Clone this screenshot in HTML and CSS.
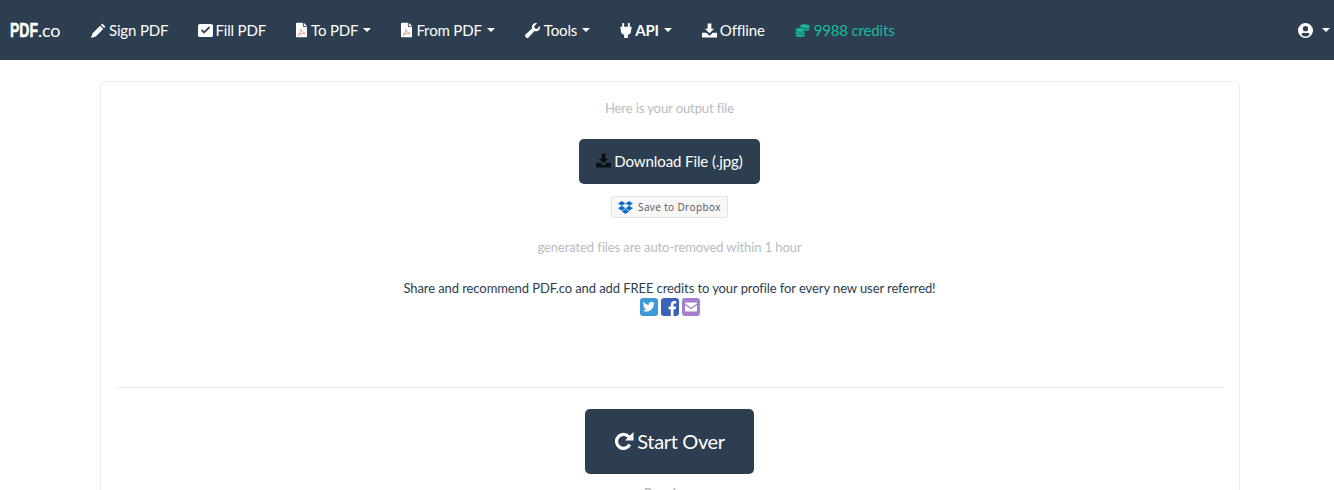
FILE: index.html
```html
<!DOCTYPE html>
<html lang="en">
<head>
<meta charset="utf-8">
<title>PDF.co</title>
<link rel="stylesheet" href="styles.css">
</head>
<body>
<svg class="sprite" width="0" height="0" aria-hidden="true">
  <symbol id="i-pdf" viewBox="0 0 12 16"><path fill="currentColor" d="M1 0h6.500v4.500H12V15a1 1 0 0 1-1 1H1a1 1 0 0 1-1-1V1a1 1 0 0 1 1-1zM8.500 0 12 3.500H8.500z"/><path fill="none" stroke="#cf8673" stroke-width=".85" d="M2 13.800c1.500-.8 3-3.500 3.500-6.500.4 2 2 4 4.500 4.400-2.500-.2-5.500.5-8 2.100z"/></symbol>
  <symbol id="i-download" viewBox="0 0 16 15"><path fill="currentColor" d="M6 0h4v5.500h3L8 10.500 3 5.500h3zM0 10h4.500L8 13l3.500-3H16v5H0z"/></symbol>
</svg>
<header class="navbar">
  <a class="brand"><b>PDF</b>.co</a>
  <nav class="nav">
    <a class="item">
      <svg class="ic" viewBox="0 0 16 16"><path fill="currentColor" d="M12 .6 15.400 4 14 5.400 10.600 2zM9.700 2.900l3.400 3.400-8 8L0 16l1.700-5.100z"/></svg>Sign PDF</a>
    <a class="item">
      <svg class="ic ic-fill" viewBox="0 0 16 16"><path fill="currentColor" fill-rule="evenodd" d="M2 1h12a2 2 0 0 1 2 2v10a2 2 0 0 1-2 2H2a2 2 0 0 1-2-2V3a2 2 0 0 1 2-2zm1.200 7 3.300 3.500 6.400-6.400-1.400-1.400-5 5-1.900-2z"/></svg>Fill PDF</a>
    <a class="item"><svg class="ic ic-pdf"><use href="#i-pdf"/></svg>To PDF<i class="caret"></i></a>
    <a class="item"><svg class="ic ic-pdf"><use href="#i-pdf"/></svg>From PDF<i class="caret"></i></a>
    <a class="item">
      <svg class="ic ic-wide" viewBox="0 0 16 16"><path fill="currentColor" d="M15.700 3.300c.6 2-.1 4-1.800 5-1.300.7-2.700.7-3.800.2L4 15.300a2.100 2.100 0 0 1-3.100-.2 2.100 2.100 0 0 1-.1-3L7.500 5.800c-.4-1.300-.2-2.700.6-3.900C9.200.4 11.100-.2 12.900.3L9.800 3.400l.6 2.300 2.300.6z"/></svg>Tools<i class="caret"></i></a>
    <a class="item strong">
      <svg class="ic ic-plug" viewBox="0 0 12 16"><path fill="currentColor" d="M2 0h2v4h4V0h2v4h2v2h-.5v2.500c0 2-1.400 3.500-3.500 4V16H4v-3.500c-2.100-.5-3.500-2-3.500-4V6H0V4h2z"/></svg>API<i class="caret"></i></a>
    <a class="item"><svg class="ic"><use href="#i-download"/></svg>Offline</a>
    <a class="item credits">
      <svg class="ic ic-wide" viewBox="0 0 16 15"><g fill="currentColor" stroke="#2c3e50" stroke-width=".7"><ellipse cx="10.500" cy="6" rx="5.300" ry="2.300"/><ellipse cx="10.500" cy="3" rx="5.300" ry="2.500"/><ellipse cx="5.500" cy="12.300" rx="5.300" ry="2.400"/><ellipse cx="5.500" cy="9.700" rx="5.300" ry="2.300"/><ellipse cx="5.500" cy="7" rx="5.300" ry="2.400"/></g></svg>9988 credits</a>
  </nav>
  <a class="item user">
    <svg class="ic-user" viewBox="0 0 16 16"><path fill="currentColor" fill-rule="evenodd" d="M8 0a8 8 0 1 1 0 16A8 8 0 0 1 8 0zm0 3.200a2.800 2.800 0 1 0 0 5.600 2.800 2.800 0 0 0 0-5.600zM3.500 12.300A5.800 5.800 0 0 0 8 14.300a5.800 5.800 0 0 0 4.500-2c-.5-1.200-1.600-2-2.800-2-.6.200-1.100.3-1.700.3s-1.100-.1-1.700-.3c-1.200 0-2.300.8-2.800 2z"/></svg><i class="caret"></i></a>
</header>
<main class="card">
  <p class="muted first">Here is your output file</p>
  <a class="btn btn-download"><svg class="ic dark"><use href="#i-download"/></svg>Download File (.jpg)</a>
  <a class="dropbox">
    <svg class="db-ic" viewBox="0 0 16 14"><path fill="#0f6fc6" d="M4 0 8 2.600 4 5.200 0 2.600zM12 0l4 2.600-4 2.600-4-2.600zM0 7.800l4-2.600 4 2.600-4 2.600zM12 5.200l4 2.600-4 2.600-4-2.600zM4 11.200l4-2.600 4 2.600L8 13.900z"/></svg>Save to Dropbox</a>
  <p class="muted auto">generated files are auto-removed within 1 hour</p>
  <p class="share">Share and recommend PDF.co and add FREE credits to your profile for every new user referred!</p>
  <div class="social">
    <svg class="soc" viewBox="0 0 18 18"><rect width="18" height="18" rx="3" fill="#3c9ad9"/><path fill="#fff" d="M15 5.200c-.5.200-1 .4-1.500.4.500-.3.900-.8 1.100-1.400-.5.300-1 .5-1.600.6a2.500 2.500 0 0 0-4.300 2.300C6.500 6.600 4.700 5.600 3.500 4.100c-.7 1.100-.3 2.600.8 3.300-.4 0-.8-.1-1.100-.3 0 1.200.8 2.200 2 2.500-.4.100-.8.100-1.100 0 .3 1 1.200 1.700 2.300 1.700A5 5 0 0 1 2.800 12.400 7.100 7.100 0 0 0 13.700 6.100c.5-.2.900-.5 1.300-.9z"/></svg>
    <svg class="soc" viewBox="0 0 18 18"><rect width="18" height="18" rx="3" fill="#3b62b8"/><path fill="#fff" d="M12.500 18v-6.800h2.200l.4-2.700h-2.600V6.900c0-.8.300-1.300 1.300-1.300h1.400V3.200c-.3 0-1-.1-2-.1-2 0-3.400 1.200-3.400 3.500v1.900H7.600v2.700h2.200V18z"/></svg>
    <svg class="soc" viewBox="0 0 18 18"><rect width="18" height="18" rx="3" fill="#a37fcc"/><path fill="#fff" d="M3 5.500c0-.6.500-1 1-1h10c.5 0 1 .4 1 1L9 9.700zM3 7l6 4.200L15 7v5.500c0 .6-.5 1-1 1H4c-.5 0-1-.4-1-1z"/></svg>
  </div>
  <hr class="rule">
  <a class="btn btn-start">
    <svg class="ic-redo" viewBox="0 0 20 20"><path fill="none" stroke="currentColor" stroke-width="3.200" d="M15.800 13.500A7 7 0 1 1 15 6"/><path fill="currentColor" d="M19.500 1v8.500H11z"/></svg>Start Over</a>
  <p class="muted preview">Preview</p>
</main>
</body>
</html>
```
FILE: styles.css
```css
* { box-sizing: border-box; }
html, body { margin: 0; height: 490px; overflow: hidden; background: #fff; }
body { font-family: Lato, "Open Sans", sans-serif; font-size: 13px; letter-spacing: -.09px; color: #2c3e50; }
.sprite { position: absolute; }
.navbar { display: flex; align-items: center; height: 60px; background: #2c3e50; color: #fff; font-size: 15px; letter-spacing: -.15px; }
.brand { width: 76px; padding-left: 10px; font-size: 18px; letter-spacing: -.2px; white-space: nowrap; }
.brand b { display: inline-block; width: 28px; font-family: "Liberation Sans", sans-serif; font-weight: 700; font-size: 20px; letter-spacing: 0; transform: scaleX(.7); transform-origin: left center; -webkit-text-stroke: .5px #fff; }
.nav { display: flex; flex: 1; }
.item { display: flex; align-items: center; padding: 0 15px; white-space: nowrap; }
.strong { font-weight: 700; }
.credits { color: #18bc9c; }
.ic { width: 15px; height: 15px; margin-right: 3px; flex: none; }
.ic-fill { margin-right: 2px; }
.ic-wide { margin-right: 4px; }
.ic-pdf { width: 11px; height: 16px; margin-right: 4px; }
.ic-plug { width: 12px; }
.caret { width: 0; height: 0; margin-left: 5px; border: 4px solid transparent; border-top-color: currentColor; border-bottom: 0; }
.user { padding: 0 4px 0 0; }
.ic-user { width: 15px; height: 15px; margin-right: 0; }
.user .caret { margin-left: 9px; }
.card { display: flex; flex-direction: column; align-items: center; width: 1140px; height: 480px; margin: 21px 0 0 100px; padding: 0 15px 0 14px; border: 1px solid #ececec; border-radius: 5px; }
.muted { margin: 0; color: #b6bcbf; line-height: 18px; }
.first { margin-top: 17px; }
.btn { display: flex; align-items: center; justify-content: center; background: #2c3e50; color: #fff; border-radius: 5px; }
.btn-download { width: 181px; height: 45px; margin-top: 22px; padding-bottom: 2px; font-size: 15px; letter-spacing: -.1px; }
.dark { color: #0b0f14; margin-right: 3px; }
.dropbox { display: flex; align-items: center; justify-content: center; width: 117px; height: 22px; margin-top: 12px; border: 1px solid #e4e4e4; border-radius: 2px; background: #f7f7f7; color: #555; font: 10px "Open Sans", sans-serif; letter-spacing: .37px; }
.db-ic { width: 15px; height: 13px; margin-right: 5px; }
.auto { margin-top: 20px; }
.share { margin: 23px 0 0; line-height: 18px; color: #2c3e50; }
.social { display: flex; gap: 3px; height: 18px; margin-top: 1px; }
.soc { width: 18px; height: 18px; }
.rule { width: 100%; height: 1px; margin: 71px 0 0; border: 0; background: #ececec; }
.btn-start { width: 169px; height: 65px; margin-top: 21px; padding-bottom: 2px; font-size: 20px; letter-spacing: -.35px; }
.ic-redo { width: 20px; height: 20px; margin-right: 3px; }
.preview { margin-top: 10px; font-size: 15px; }
```
